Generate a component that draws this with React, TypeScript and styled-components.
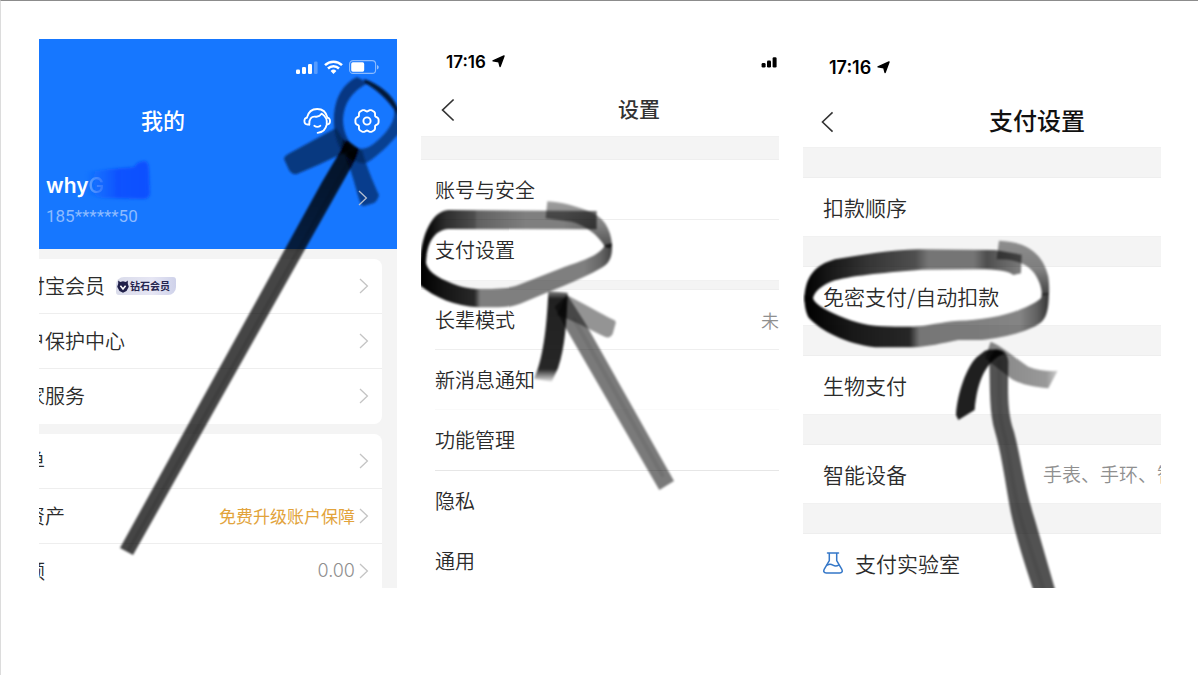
import React from "react";
import styled, { createGlobalStyle, css } from "styled-components";

const GlobalStyle = createGlobalStyle`
  *, *::before, *::after { box-sizing: border-box; }
  body {
    margin: 0;
    background: #fff;
    color: #2b2b2b;
    font-family: "Noto Sans CJK SC", sans-serif;
  }
  button {
    padding: 0;
    border: 0;
    background: none;
    color: inherit;
    font: inherit;
    text-align: left;
    cursor: pointer;
  }
  svg { display: block; flex: none; }
  h2, p, ul { margin: 0; padding: 0; }
  ul { list-style: none; }
`;

const Page = styled.main`
  min-height: 100vh;
  padding: 38px 37px 38px 38px;
  border-top: 1px solid #8c8c8c;
  border-left: 1px solid #dcdcdc;
  display: grid;
  grid-template-columns: repeat(3, minmax(0, 1fr));
  gap: 24px;
  align-items: start;
`;

const Phone = styled.section<{ $tone?: string }>`
  position: relative;
  aspect-ratio: 358 / 549;
  overflow: hidden;
  background: ${(p) => p.$tone ?? "#fff"};
`;

const Ink = styled.svg`
  position: absolute;
  inset: 0;
  width: 100%;
  height: 100%;
  pointer-events: none;
`;

/* ---------- profile screen ---------- */

const ProfileHeader = styled.header`
  background: #1677ff;
  color: #fff;
`;

const ProfileStatus = styled.div`
  height: 56px;
  padding-right: 18px;
  display: flex;
  align-items: center;
  justify-content: flex-end;
  gap: 6px;
`;

const ProfileNav = styled.div`
  height: 51px;
  padding: 0 16px 0 102px;
  display: flex;
  align-items: center;
  gap: 22px;
`;

const ProfileTitle = styled.h2`
  flex: 1;
  padding-bottom: 4px;
  font-size: 22px;
  line-height: 32px;
  font-weight: 500;
`;

const UserRow = styled.button`
  width: 100%;
  height: 103px;
  padding: 0 29px 0 7px;
  display: flex;
  align-items: center;
  justify-content: space-between;
`;

const UserText = styled.span`
  padding-top: 4px;
  display: flex;
  flex-direction: column;
  gap: 4px;
`;

const UserName = styled.span`
  position: relative;
  font-family: Inter, sans-serif;
  font-size: 21px;
  line-height: 28px;
  font-weight: 600;
`;

const FadedLetter = styled.span`
  opacity: 0.4;
  font-weight: 500;
`;

const Smudge = styled.svg`
  position: absolute;
  left: 34px;
  top: -14px;
`;

const UserPhone = styled.span`
  font-family: Roboto, sans-serif;
  font-size: 17px;
  line-height: 24px;
  color: #8dbbff;
`;

const AboveInk = styled.span`
  position: relative;
  z-index: 1;
`;

const Card = styled.ul`
  margin: 10px 15px 0 0;
  background: #fff;
  border-radius: 0 8px 8px 0;
`;

const CardItem = styled.li`
  height: 55px;
  &:not(:last-child) { border-bottom: 1px solid #eee; }
`;

const CardRow = styled.button`
  width: 100%;
  height: 54px;
  padding-right: 13px;
  display: flex;
  align-items: center;
  gap: 4px;
`;

const CardLabel = styled.span`
  margin-left: -14px;
  margin-right: auto;
  display: flex;
  align-items: center;
  gap: 11px;
  font-size: 20px;
  line-height: 30px;
  font-weight: 350;
  white-space: nowrap;
`;

const CardNote = styled.span<{ $gold?: boolean }>`
  font-family: ${(p) => (p.$gold ? "inherit" : "Inter, sans-serif")};
  font-size: ${(p) => (p.$gold ? "17px" : "18px")};
  font-weight: ${(p) => (p.$gold ? 400 : 300)};
  line-height: 26px;
  color: ${(p) => (p.$gold ? "#e2a33b" : "#8f8f8f")};
  white-space: nowrap;
`;

const Badge = styled.span`
  height: 18px;
  padding: 0 6px 0 1px;
  display: flex;
  align-items: center;
  gap: 1px;
  border-radius: 8px 3px 8px 3px;
  background: linear-gradient(90deg, #d9dbea, #e6e6f4 60%, #cfd2ea);
  color: #25254f;
  font-size: 10px;
  line-height: 14px;
  font-weight: 700;
`;

/* ---------- settings screens ---------- */

type Size = "regular" | "large";

const StatusBar = styled.div<{ $size: Size }>`
  display: flex;
  align-items: center;
  font-family: Inter, sans-serif;
  font-weight: 600;
  color: #000;
  ${(p) =>
    p.$size === "large"
      ? css`
          height: 57px;
          padding: 0 26px;
          font-size: 18px;
        `
      : css`
          height: 45px;
          padding: 0 2px 0 25px;
          font-size: 17px;
        `}
`;

const Clock = styled.span`
  margin-right: auto;
  display: flex;
  align-items: center;
  gap: 6px;
`;

const NavBar = styled.header<{ $size: Size }>`
  display: grid;
  align-items: center;
  ${(p) =>
    p.$size === "large"
      ? css`
          height: 51px;
          padding-left: 18px;
          grid-template-columns: 168px 1fr;
          font-size: 24px;
          color: #111;
        `
      : css`
          height: 52px;
          padding-left: 20px;
          grid-template-columns: 177px 1fr;
          font-size: 21px;
          color: #333;
        `}
`;

const NavTitle = styled.h2`
  padding-bottom: 4px;
  font-size: inherit;
  line-height: 36px;
  font-weight: 500;
`;

const Band = styled.div<{ $height: number }>`
  height: ${(p) => p.$height}px;
  background: #f4f4f4;
  border-top: 1px solid #f1f1f1;
  border-bottom: 1px solid #eee;
`;

const SettingItem = styled.li<{ $size: Size; $line?: string }>`
  margin-left: ${(p) => (p.$size === "large" ? 20 : 14)}px;
  border-bottom: ${(p) => (p.$line ? `1px solid ${p.$line}` : "0")};
`;

const SettingRow = styled.button<{ $size: Size; $short?: boolean }>`
  width: 100%;
  height: ${(p) => (p.$size === "large" ? 58 : p.$short ? 59 : 60)}px;
  display: flex;
  align-items: center;
  gap: 12px;
  font-size: ${(p) => (p.$size === "large" ? 21 : 20)}px;
  line-height: 30px;
  font-weight: 350;
  white-space: nowrap;
`;

const SettingNote = styled.span<{ $overhang?: boolean }>`
  margin-left: auto;
  margin-right: ${(p) => (p.$overhang ? -15 : 0)}px;
  font-size: ${(p) => (p.$overhang ? 19 : 18)}px;
  color: #8f8f8f;
`;

/* ---------- icons ---------- */

const Chevron = ({ color = "#c4c4c4" }: { color?: string }) => (
  <svg width="10" height="16" viewBox="0 0 10 16" fill="none" stroke={color} strokeWidth="1.3" aria-hidden="true">
    <path d="M1 1l7.4 7L1 15" />
  </svg>
);

const BackIcon = ({ size }: { size: number }) => (
  <svg width={(size * 14) / 24} height={size} viewBox="0 0 14 24" fill="none" stroke="#333" strokeWidth="1.7" aria-hidden="true">
    <path d="M12.6 1.5L1.6 12l11 10.5" />
  </svg>
);

const SignalIcon = ({ bars = 4 }: { bars?: number }) => (
  <svg width={bars === 4 ? 22 : 16} height="14" viewBox={bars === 4 ? "0 0 22 14" : "0 0 16 14"} fill="currentColor" aria-hidden="true">
    {bars === 4 ? (
      <>
        <rect x="0" y="9.5" width="4" height="4.5" rx="1.2" />
        <rect x="6" y="7" width="4" height="7" rx="1.2" />
        <rect x="12" y="4" width="4" height="10" rx="1.2" />
        <rect x="18" y="1.5" width="3.6" height="12.5" rx="1.2" opacity=".28" />
      </>
    ) : (
      <>
        <rect x="0.6" y="8" width="4" height="4.5" rx="1.3" />
        <rect x="6" y="5.5" width="4" height="7" rx="1.3" />
        <rect x="11.6" y="2.2" width="4" height="10.3" rx="1.3" />
      </>
    )}
  </svg>
);

const WifiIcon = () => (
  <svg width="19" height="14" viewBox="0 0 19 14" fill="none" stroke="#fff" strokeWidth="2.5" aria-hidden="true">
    <path d="M1 5.2a12.2 12.2 0 0 1 17 0" />
    <path d="M4 8.5a7.9 7.9 0 0 1 11 0" />
    <path d="M9.5 13.9l-2.9-3a4.2 4.2 0 0 1 5.8 0z" fill="#fff" stroke="none" />
  </svg>
);

const BatteryIcon = () => (
  <svg width="30" height="14" viewBox="0 0 30 14" aria-hidden="true">
    <rect x=".6" y=".6" width="26" height="12.8" rx="3.5" fill="none" stroke="#fff" strokeOpacity=".5" strokeWidth="1.1" />
    <rect x="2.2" y="2.3" width="13" height="9.4" rx="1.6" fill="#fff" />
    <path d="M28 5v4.4c1.2-.5 1.7-1.3 1.7-2.2S29.2 5.4 28 5z" fill="#fff" fillOpacity=".55" />
  </svg>
);

const HeadsetIcon = () => (
  <svg width="28" height="28" viewBox="0 0 28 28" fill="none" stroke="#fff" strokeWidth="1.8" strokeLinecap="round" strokeLinejoin="round" aria-hidden="true">
    <path d="M3.9 10.6C5.3 5 9.4 2 14.2 2s8.9 3 10.3 8.6" />
    <path d="M6.3 17.5H4.6c-2 0-3.2-1.4-3.2-3.4s1.1-3.3 2.5-3.5" />
    <path d="M24.5 10.6c1.5.3 2.5 1.5 2.5 3.5s-1.2 3.4-3 3.400" />
    <path d="M6.3 17.5C5.800 12 8.600 9.300 12 9.600c2.500.5 4.800-.2 6.500-3 3.500 2.200 5.900 6.500 5.200 10.900-.9 4.800-4.400 7.900-9.100 8.300" />
    <path d="M11.300 18.800c1.800 1.200 4.300 1.200 6.100 0" />
  </svg>
);

const GEAR_OUTLINE =
  Array.from({ length: 73 }, (_, i) => {
    const a = (i * 5 * Math.PI) / 180;
    const r = 10.9 + 1.05 * Math.cos(6 * a) - 0.35 * Math.cos(12 * a);
    return `${i ? "L" : "M"}${(14 + r * Math.cos(a)).toFixed(2)} ${(14 + r * Math.sin(a)).toFixed(2)}`;
  }).join("") + "Z";

const GearIcon = () => (
  <svg width="28" height="28" viewBox="0 0 28 28" fill="none" stroke="#fff" strokeWidth="1.9" strokeLinejoin="round" aria-hidden="true">
    <path d={GEAR_OUTLINE} />
    <circle cx="14" cy="14" r="3.6" />
  </svg>
);

const LocationIcon = () => (
  <svg width="13" height="13" viewBox="0 0 13 13" fill="#000" aria-hidden="true">
    <path d="M12 .9L8.1 11.6 6.8 6.7 1 5.800z" strokeLinejoin="round" stroke="#000" strokeWidth="1.400" />
  </svg>
);

const DiamondIcon = () => (
  <svg width="12" height="13" viewBox="0 0 12 13" aria-hidden="true">
    <path d="M1.2.5l2 1.4L6 1.3l2.8.6 2-1.4v3.2l1 3.1L9.5 11 6 12.7 2.5 11 .2 6.8l1-3.1z" fill="#20204a" />
    <path d="M3.4 5.7L6 9l2.6-3.3" fill="none" stroke="#fff" strokeWidth="1.5" />
  </svg>
);

const FlaskIcon = () => (
  <svg width="20" height="22" viewBox="0 0 20 22" fill="none" stroke="#3477c8" strokeWidth="1.5" strokeLinejoin="round" strokeLinecap="round" aria-hidden="true">
    <path d="M4.5 1h11M6.3 1v7.6L1.3 17.2C.1 19.4 1 21 3.2 21h13.6c2.2 0 3.1-1.6 1.9-3.8l-5-8.6V1" />
    <path d="M4.3 13c2-1.2 3.7-1.1 5.6.1s3.8 1.3 5.7.1" />
  </svg>
);

/* ---------- brush marks ---------- */

const Soft = ({ id, amount }: { id: string; amount: number }) => (
  <filter id={id} x="-10%" y="-10%" width="120%" height="120%">
    <feGaussianBlur stdDeviation={amount} />
  </filter>
);

const Stops = ({ list }: { list: [number, string, number][] }) => (
  <>
    {list.map(([offset, color, alpha]) => (
      <stop key={offset} offset={offset} stopColor={color} stopOpacity={alpha} />
    ))}
  </>
);

const ProfileInk = () => (
  <Ink viewBox="39 39 358 549" aria-hidden="true">
    <defs>
      <Soft id="p1" amount={0.8} />
      <linearGradient id="shaft1" gradientUnits="userSpaceOnUse" x1="0" y1="140" x2="0" y2="252">
        <Stops list={[[0, "#000", 0.85], [0.97, "#000", 0.76], [1, "#000", 0.73]]} />
      </linearGradient>
    </defs>
    <g filter="url(#p1)">
      <path d="M284 159Q284 156 290 153L336 128L350 150L318 165L297 174Q292 175 289 170z" fill="#021433" fillOpacity=".62" />
      <path d="M347 152L362 150C366 165 373 182 379 195Q378 200 374 203L364 206Q361 206 360 202C356 190 352 172 346 158z" fill="#04204f" fillOpacity=".64" />
      <path d="M357 77L368 83C352 91 344 103 343 119C343 132 348 140 353 148L343 153C336 143 333 130 334 114C336 96 343 84 357 77z" fill="#04204f" fillOpacity=".7" />
      <path d="M364 79C379 84 392 94 398 108V116C392 104 379 91 365 83z" fill="#020d24" fillOpacity=".9" />
      <path d="M397 108L400 132C390 144 379 155 368 162C360 166 352 160 347 152L356 147C366 153 377 142 386 132C393 123 395 116 394 110z" fill="#04204f" fillOpacity=".62" />
      <path d="M343 139L358 150L354 162L341 152z" fill="#000" fillOpacity=".6" />
      <path d="M347 140L359 149Q356 160 349 171L133 555L120 548L322 182z" fill="url(#shaft1)" />
      <path d="M349 160L128 551" stroke="#000" strokeOpacity=".12" strokeWidth="3" />
    </g>
  </Ink>
);

const SettingsInk = () => (
  <Ink viewBox="421 39 358 549" aria-hidden="true">
    <defs>
      <Soft id="p2" amount={3} />
      <linearGradient id="top2" gradientUnits="userSpaceOnUse" x1="18" y1="0" x2="548" y2="0">
        <Stops list={[[0, "#000", 1], [0.06, "#000", 0.94], [0.14, "#000", 0.82], [0.3, "#000", 0.7], [0.32, "#000", 0.62], [0.6, "#000", 0.5], [0.8, "#000", 0.5], [1, "#000", 0.6]]} />
      </linearGradient>
      <linearGradient id="low2" gradientUnits="userSpaceOnUse" x1="18" y1="0" x2="592" y2="0">
        <Stops list={[[0, "#000", 1], [0.12, "#000", 0.92], [0.28, "#000", 0.84], [0.31, "#000", 0.5], [0.85, "#000", 0.5], [0.94, "#000", 0.6], [1, "#000", 0.75]]} />
      </linearGradient>
      <linearGradient id="right2" gradientUnits="userSpaceOnUse" x1="0" y1="20" x2="0" y2="165">
        <Stops list={[[0, "#000", 0.38], [0.5, "#000", 0.5], [1, "#000", 0.72]]} />
      </linearGradient>
      <linearGradient id="wing2" gradientUnits="userSpaceOnUse" x1="0" y1="35" x2="0" y2="305">
        <Stops list={[[0, "#000", 0.5], [0.08, "#000", 0.87], [0.86, "#000", 0.85], [1, "#000", 0.1]]} />
      </linearGradient>
    </defs>
    <g transform="translate(415 195) scale(.3333)" filter="url(#p2)">
      <path d="M14 210C18 130 45 50 100 45L545 48V103L100 102C60 105 34 140 33 208z" fill="url(#top2)" />
      <path d="M397 19C445 22 485 35 520 48C565 65 588 100 591 150C588 160 582 162 570 155C550 120 510 90 470 80L392 70z" fill="url(#right2)" />
      <path d="M591 145C593 180 586 205 560 218C490 258 400 290 330 320C305 332 285 336 250 337H190C120 333 60 308 14 270V200L33 205C40 235 80 255 130 272C160 280 180 282 200 282C250 282 285 280 310 270L450 215C510 195 555 180 570 150z" fill="url(#low2)" />
    </g>
    <g transform="translate(520 280) scale(.3333)" filter="url(#p2)">
      <path d="M140 45C190 70 240 100 280 119Q289 122 287 130L278 162Q270 176 256 171C220 155 160 120 110 105z" fill="#000" fillOpacity=".42" />
      <path d="M104 80L142 45L196 130L462 603L418 630L132 135z" fill="#000" fillOpacity=".52" />
      <path d="M430 590L160 115" stroke="#000" strokeOpacity=".08" strokeWidth="12" />
      <path d="M85 33L143 38C140 120 136 200 114 265L95 305L42 296C68 240 80 150 85 33z" fill="url(#wing2)" />
    </g>
  </Ink>
);

const PaymentInk = () => (
  <Ink viewBox="803 39 358 549" aria-hidden="true">
    <defs>
      <Soft id="p3" amount={3} />
      <linearGradient id="top3" gradientUnits="userSpaceOnUse" x1="28" y1="0" x2="680" y2="0">
        <Stops list={[[0, "#000", 1], [0.1, "#000", 0.92], [0.3, "#000", 0.78], [0.51, "#000", 0.68], [0.57, "#000", 0.52], [0.78, "#000", 0.52], [0.84, "#000", 0.68], [1, "#000", 0.5]]} />
      </linearGradient>
      <linearGradient id="low3" gradientUnits="userSpaceOnUse" x1="28" y1="0" x2="762" y2="0">
        <Stops list={[[0, "#000", 1], [0.2, "#000", 0.9], [0.43, "#000", 0.84], [0.47, "#000", 0.52], [0.88, "#000", 0.48], [0.95, "#000", 0.62], [1, "#000", 0.8]]} />
      </linearGradient>
      <linearGradient id="right3" gradientUnits="userSpaceOnUse" x1="0" y1="30" x2="0" y2="195">
        <Stops list={[[0, "#000", 0.42], [0.5, "#000", 0.48], [1, "#000", 0.74]]} />
      </linearGradient>
      <linearGradient id="wing3" gradientUnits="userSpaceOnUse" x1="140" y1="0" x2="352" y2="0">
        <Stops list={[[0, "#000", 0.48], [0.85, "#000", 0.4], [1, "#000", 0.2]]} />
      </linearGradient>
    </defs>
    <g transform="translate(795 230) scale(.3333)" filter="url(#p3)">
      <path d="M28 215C28 140 60 105 120 88C200 75 280 60 370 58L600 60L680 74L678 130L655 135C640 122 600 118 555 118L380 119C280 127 180 135 120 151C80 165 58 185 54 205z" fill="url(#top3)" />
      <path d="M612 32C700 35 745 75 760 140C763 160 763 180 762 192L740 196C742 180 735 155 718 130C700 105 660 85 605 88z" fill="url(#right3)" />
      <path d="M762 190C761 240 755 265 735 280C700 305 620 325 560 330H490C440 340 400 350 355 352H240C150 340 80 305 40 262C30 240 28 220 28 195L54 205C60 225 100 245 150 265C200 285 240 290 300 290H355C400 288 440 275 490 272C580 272 690 245 738 205L741 192z" fill="url(#low3)" />
    </g>
    <g transform="translate(940 330) scale(.3333)" filter="url(#p3)">
      <path d="M152 35C190 50 225 85 265 110C295 122 325 124 353 122L325 175C280 170 240 163 215 147L135 85z" fill="url(#wing3)" />
      <path d="M148 85L165 58Q200 55 205 95C205 160 198 240 222 305C240 370 250 460 285 570L350 795H285C250 690 228 620 212 545C195 450 182 360 165 305C148 250 150 180 148 85z" fill="#000" fillOpacity=".68" />
      <path d="M178 90C176 200 175 260 195 320C215 420 220 500 250 590L316 795" fill="none" stroke="#000" strokeOpacity=".08" strokeWidth="14" />
      <path d="M135 62Q170 52 195 70C140 90 112 150 104 240L55 270L48 255C52 190 80 110 110 82z" fill="#000" fillOpacity=".88" />
    </g>
  </Ink>
);

/* ---------- screens ---------- */

const profileCards: { label: string; note?: string; gold?: boolean; badge?: string }[][] = [
  [{ label: "付宝会员", badge: "钻石会员" }, { label: "户保护中心" }, { label: "家服务" }],
  [{ label: "单" }, { label: "资产", note: "免费升级账户保障", gold: true }, { label: "额", note: "0.00" }],
];

const ProfileScreen = () => (
  <Phone $tone="#f4f4f4">
    <ProfileHeader>
      <ProfileStatus>
        <SignalIcon />
        <WifiIcon />
        <BatteryIcon />
      </ProfileStatus>
      <ProfileNav>
        <ProfileTitle>我的</ProfileTitle>
        <button aria-label="客服"><HeadsetIcon /></button>
        <button aria-label="设置"><GearIcon /></button>
      </ProfileNav>
      <UserRow>
        <UserText>
          <UserName>
            why<FadedLetter>G</FadedLetter>
            <Smudge width="76" height="46" viewBox="0 0 76 46" aria-hidden="true">
              <defs>
                <linearGradient id="smudge">
                  <Stops list={[[0, "#0f5cff", 0], [0.2, "#0f62ff", 0.55], [0.5, "#0a50ff", 0.95], [1, "#0a50ff", 1]]} />
                </linearGradient>
                <Soft id="smudgeSoft" amount={1.5} />
              </defs>
              <path d="M5 14L30 11L54 9Q57 3 65 3Q69 4 69 12L70 36Q69 41 63 41L22 40L8 37z" fill="url(#smudge)" filter="url(#smudgeSoft)" />
            </Smudge>
          </UserName>
          <UserPhone>185******50</UserPhone>
        </UserText>
        <AboveInk>
          <Chevron color="#b4bfd0" />
        </AboveInk>
      </UserRow>
    </ProfileHeader>
    {profileCards.map((rows, i) => (
      <Card key={i}>
        {rows.map((row) => (
          <CardItem key={row.label}>
            <CardRow>
              <CardLabel>
                {row.label}
                {row.badge && (
                  <Badge>
                    <DiamondIcon />
                    {row.badge}
                  </Badge>
                )}
              </CardLabel>
              {row.note && <CardNote $gold={row.gold}>{row.note}</CardNote>}
              <Chevron />
            </CardRow>
          </CardItem>
        ))}
      </Card>
    ))}
    <ProfileInk />
  </Phone>
);

const SettingsScreen = () => (
  <Phone>
    <StatusBar $size="regular">
      <Clock>17:16<LocationIcon /></Clock>
      <SignalIcon bars={3} />
    </StatusBar>
    <NavBar $size="regular">
      <button aria-label="返回"><BackIcon size={24} /></button>
      <NavTitle>设置</NavTitle>
    </NavBar>
    <Band $height={24} />
    <ul>
      <SettingItem $size="regular" $line="#eee"><SettingRow $size="regular" $short>账号与安全</SettingRow></SettingItem>
      <SettingItem $size="regular"><SettingRow $size="regular">支付设置</SettingRow></SettingItem>
    </ul>
    <Band $height={10} />
    <ul>
      <SettingItem $size="regular" $line="#eee">
        <SettingRow $size="regular" $short>长辈模式<SettingNote>未</SettingNote></SettingRow>
      </SettingItem>
      <SettingItem $size="regular" $line="#fafafa"><SettingRow $size="regular" $short>新消息通知</SettingRow></SettingItem>
      <SettingItem $size="regular" $line="#e6e6e6"><SettingRow $size="regular">功能管理</SettingRow></SettingItem>
      <SettingItem $size="regular"><SettingRow $size="regular">隐私</SettingRow></SettingItem>
      <SettingItem $size="regular"><SettingRow $size="regular">通用</SettingRow></SettingItem>
    </ul>
    <SettingsInk />
  </Phone>
);

const paymentRows: { label: string; note?: string; lab?: boolean }[] = [
  { label: "扣款顺序" },
  { label: "免密支付/自动扣款" },
  { label: "生物支付" },
  { label: "智能设备", note: "手表、手环、智" },
  { label: "支付实验室", lab: true },
];

const PaymentScreen = () => (
  <Phone>
    <StatusBar $size="large">
      <Clock>17:16<LocationIcon /></Clock>
    </StatusBar>
    <NavBar $size="large">
      <button aria-label="返回"><BackIcon size={22} /></button>
      <NavTitle>支付设置</NavTitle>
    </NavBar>
    <ul>
      {paymentRows.map((row) => (
        <React.Fragment key={row.label}>
          <Band as="li" role="presentation" $height={31} />
          <SettingItem $size="large">
            <SettingRow $size="large">
              {row.lab && <FlaskIcon />}
              {row.label}
              {row.note && <SettingNote $overhang>{row.note}</SettingNote>}
            </SettingRow>
          </SettingItem>
        </React.Fragment>
      ))}
    </ul>
    <PaymentInk />
  </Phone>
);

export default function App() {
  return (
    <>
      <GlobalStyle />
      <Page>
        <ProfileScreen />
        <SettingsScreen />
        <PaymentScreen />
      </Page>
    </>
  );
}
